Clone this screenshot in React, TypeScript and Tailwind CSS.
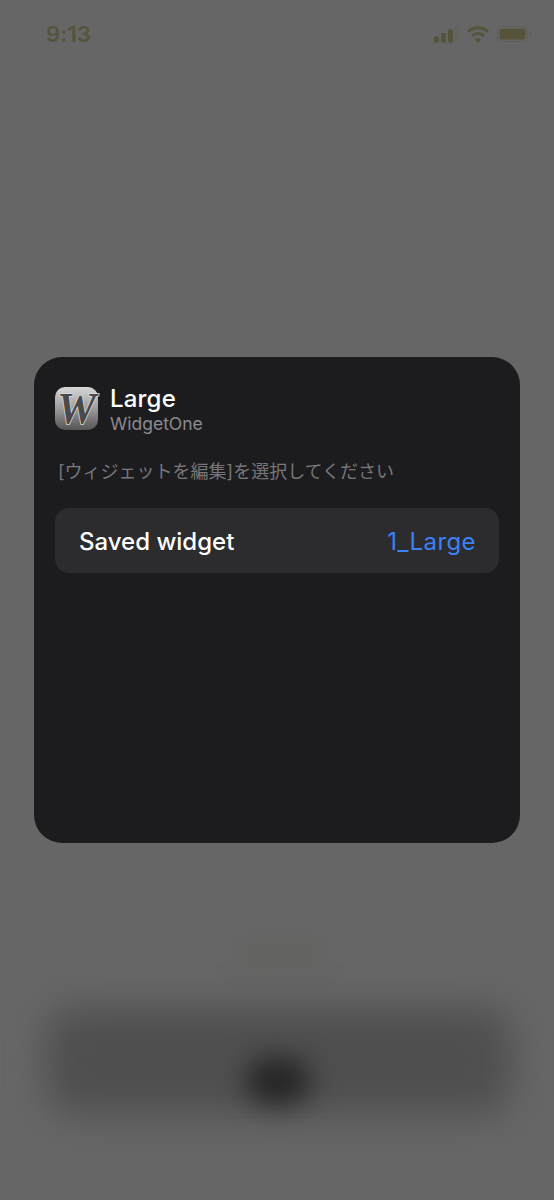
const sans = "font-['Inter','Liberation_Sans','Noto_Sans_CJK_JP',sans-serif]";

function StatusBar() {
  return (
    <div className="flex items-center justify-between h-[68px] pl-[46px] pr-[21px] text-[#55533a]">
      <span className="text-[22px] font-semibold leading-none tracking-[0.2px]">9:13</span>
      <div className="flex items-center gap-[8px]">
        <svg width="25" height="17" viewBox="0 0 25 17" fill="currentColor">
          <rect x="0" y="10.5" width="5" height="6" rx="1.2" />
          <rect x="7" y="7" width="5" height="9.5" rx="1.2" />
          <rect x="14" y="3.5" width="5" height="13" rx="1.2" />
          <rect x="21" y="0" width="4" height="16.5" rx="1.2" opacity="0.12" />
        </svg>
        <svg width="22" height="17" viewBox="0 0 22 17" fill="none" stroke="currentColor" strokeWidth="3">
          <path d="M1 5.6 C7 0.4 15 0.4 21 5.6" />
          <path d="M5 9.8 C8.6 6.8 13.4 6.8 17 9.8" />
          <path d="M11 17 L7.6 13.4 C9.6 11.8 12.4 11.8 14.4 13.4 Z" fill="currentColor" stroke="none" />
        </svg>
        <svg width="36" height="16" viewBox="0 0 36 16" fill="currentColor">
          <rect x="0.5" y="0.5" width="30" height="15" rx="4" fill="none" stroke="currentColor" strokeOpacity="0.4" />
          <rect x="2.5" y="2.5" width="26" height="11" rx="2.5" />
          <rect x="32.5" y="5.5" width="1.8" height="5" rx="0.9" opacity="0.4" />
        </svg>
      </div>
    </div>
  );
}

function AppIcon() {
  return (
    <div className="flex items-center justify-center w-[43px] h-[43px] rounded-[10px] bg-gradient-to-b from-[#d8d8d8] via-[#9c9c9c] to-[#555555]">
      <span className="font-['Liberation_Serif',serif] italic font-bold text-[44px] leading-none text-[#4a4a4a] [-webkit-text-stroke:1.5px_#dcdcdc] [paint-order:stroke_fill]">
        W
      </span>
    </div>
  );
}

export default function App() {
  return (
    <div className={`relative w-[554px] h-[1200px] overflow-hidden bg-[#666666] ${sans}`}>
      <StatusBar />

      {/* blurred home screen behind the sheet */}
      <div className="absolute left-[46px] top-[1008px] w-[466px] h-[106px] rounded-[30px] bg-[#4f4f4f] blur-[18px]" />
      <div className="absolute left-[246px] top-[1058px] w-[64px] h-[46px] rounded-[24px] bg-[#242424] blur-[14px]" />
      <div className="absolute left-[240px] top-[948px] w-[80px] h-[12px] rounded-full bg-[#5f5f5a] blur-[12px]" />

      <div className="mx-[34px] mt-[289px] h-[486px] rounded-[28px] bg-[#1c1c1e] px-[21px] pt-[30px]">
        <div className="flex items-start gap-[12px]">
          <AppIcon />
          <div className="-mt-[1px]">
            <div className="text-[24px] leading-[26px] font-medium tracking-[0.2px] text-white">Large</div>
            <div className="text-[17.5px] leading-[22px] mt-[1px] text-[#8b8b90]">WidgetOne</div>
          </div>
        </div>

        <p className="mt-[25px] ml-[3px] text-[18px] leading-[24px] text-[#77777b]">
          [ウィジェットを編集]を選択してください
        </p>

        <div className="flex items-center justify-between mt-[24px] h-[65px] rounded-[14px] bg-[#2c2c2e] pl-[24px] pr-[23px] pt-[2px] text-[24px]">
          <span className="font-medium text-white">Saved widget</span>
          <span className="text-[#3b82f6] tracking-[0.4px]">1_Large</span>
        </div>
      </div>
    </div>
  );
}
